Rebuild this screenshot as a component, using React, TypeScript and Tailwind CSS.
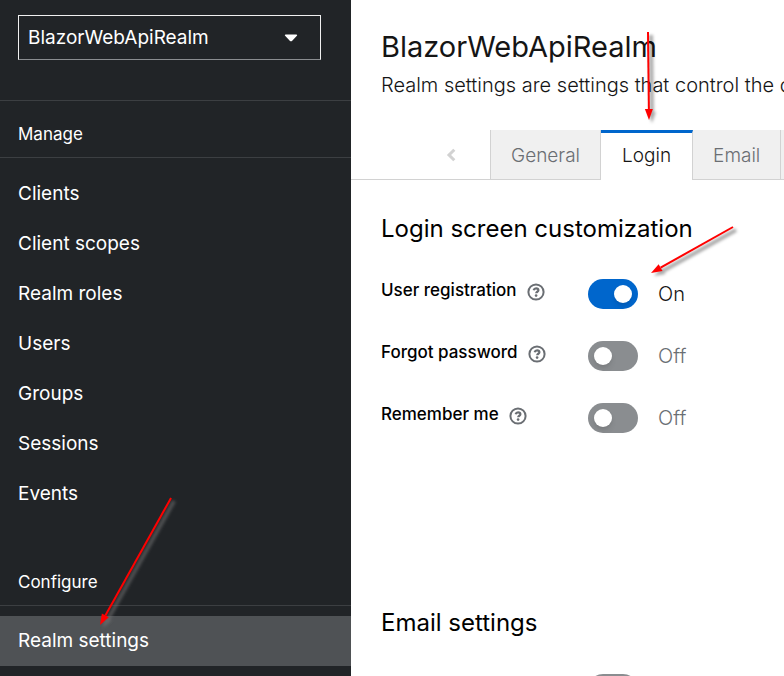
import { useState } from "react";

const manageItems = ["Clients", "Client scopes", "Realm roles", "Users", "Groups", "Sessions", "Events"];

function NavLink({ label, active = false }: { label: string; active?: boolean }) {
  return (
    <li>
      <a
        href="#"
        aria-current={active ? "page" : undefined}
        className={`flex h-[50px] items-center px-[18px] text-[19px] ${active ? "bg-[#4f5255]" : ""}`}
      >
        {label}
      </a>
    </li>
  );
}

function NavHeading({ children }: { children: string }) {
  return (
    <h2 className="flex h-[57px] items-center border-b border-[#3c3f42] px-[18px] pt-[11px] text-[17px]">
      {children}
    </h2>
  );
}

function Sidebar() {
  return (
    <nav className="w-[351px] shrink-0 overflow-hidden bg-[#212427] text-white">
      <div className="border-b border-[#3c3f42] px-[18px] pt-[15px] pb-[40px]">
        <div className="relative mr-[12px]">
          <select
            aria-label="Realm"
            className="block h-[45px] w-full appearance-none border border-[#f0f0f0] border-b-[#8a8d90] bg-transparent px-[9px] pt-[2px] text-[19px] outline-none"
          >
            <option>BlazorWebApiRealm</option>
          </select>
          <svg className="pointer-events-none absolute top-[19px] right-[23px]" width="14" height="8" viewBox="0 0 14 8" aria-hidden="true">
            <path d="M1.6 0.5h10.8c.7 0 1 .8.5 1.3L8 6.9c-.6.6-1.4.6-2 0L1.1 1.8C.6 1.300.9.5 1.600.5z" fill="#fff" />
          </svg>
        </div>
      </div>
      <NavHeading>Manage</NavHeading>
      <ul className="pt-[11px] pb-[30px]">
        {manageItems.map((item) => (
          <NavLink key={item} label={item} />
        ))}
      </ul>
      <NavHeading>Configure</NavHeading>
      <ul className="pt-[10px]">
        <NavLink label="Realm settings" active />
      </ul>
    </nav>
  );
}

function HelpIcon() {
  return (
    <svg width="18" height="18" viewBox="0 0 18 18" fill="none" stroke="#6a6e73" aria-hidden="true">
      <circle cx="9" cy="9" r="7.6" strokeWidth="2" />
      <path d="M6.600 7.200C7 5.900 7.900 5.300 9.100 5.300c1.300 0 2.300.8 2.300 1.900 0 1.500-2.200 1.600-2.200 3.100" strokeWidth="2.200" />
      <circle cx="9.100" cy="12.600" r="1.300" fill="#6a6e73" stroke="none" />
    </svg>
  );
}

function SettingRow({ id, label, initial = false }: { id: string; label: string; initial?: boolean }) {
  const [on, setOn] = useState(initial);
  return (
    <div className="flex h-[30px] items-center">
      <div className="flex w-[207px] shrink-0 items-center gap-[10px] pb-[4px]">
        <label htmlFor={id} className="pb-[4px] text-[17px] leading-[22px] font-medium whitespace-nowrap text-black">
          {label}
        </label>
        <button type="button" aria-label={`More help for ${label}`}>
          <HelpIcon />
        </button>
      </div>
      <input
        id={id}
        type="checkbox"
        role="switch"
        checked={on}
        onChange={(e) => setOn(e.target.checked)}
        className="h-[30px] w-[50px] shrink-0 appearance-none rounded-full bg-[#8a8d90] p-[6px] before:block before:size-[18px] before:rounded-full before:bg-white before:shadow-md checked:bg-[#0066cc] checked:pl-[26px]"
      />
      <span className={`pl-[20px] text-[20px] font-light ${on ? "text-[#151515]" : "text-[#6a6e73]"}`}>
        {on ? "On" : "Off"}
      </span>
    </div>
  );
}

function Tab({ label, active = false }: { label: string; active?: boolean }) {
  return (
    <button
      type="button"
      role="tab"
      aria-selected={active}
      className={`h-[50px] shrink-0 border-[#d2d2d2] text-[19px] font-light ${
        active
          ? "border-t-[3px] border-r border-t-[#0066cc] bg-white px-[21px] pb-[1px] text-[#151515]"
          : "border-r border-b bg-[#f0f0f0] px-[20px] pt-[3px] text-[#6a6e73]"
      }`}
    >
      {label}
    </button>
  );
}

function Arrow({ x1, y1, x2, y2, shadow }: { x1: number; y1: number; x2: number; y2: number; shadow: string }) {
  const length = Math.hypot(x2 - x1, y2 - y1);
  const ux = (x2 - x1) / length;
  const uy = (y2 - y1) / length;
  const bx = x2 - ux * 11;
  const by = y2 - uy * 11;
  const head = `${x2},${y2} ${bx - uy * 4},${by + ux * 4} ${bx + uy * 4},${by - ux * 4}`;
  return (
    <g>
      <g transform="translate(3 3)" stroke={shadow} fill={shadow} filter="url(#soft)">
        <line x1={x1} y1={y1} x2={bx} y2={by} strokeWidth="4" />
        <polygon points={head} stroke="none" />
      </g>
      <line x1={x1} y1={y1} x2={bx} y2={by} stroke="#ff0000" strokeWidth="2" />
      <polygon points={head} fill="#ff0000" />
    </g>
  );
}

export default function App() {
  return (
    <div className="relative flex h-screen overflow-hidden bg-white font-['Inter','Liberation_Sans',sans-serif] text-[#151515]">
      <Sidebar />
      <main className="min-w-0 flex-1 overflow-hidden">
        <header className="px-[30px] pt-[27px]">
          <h1 className="text-[29px] leading-[40px]">BlazorWebApiRealm</h1>
          <p className="pt-[4px] text-[20px] leading-[28px] font-light whitespace-nowrap">
            Realm settings are settings that control the options for users, applications, roles, and groups in the current realm.
          </p>
        </header>
        <div className="flex pt-[31px]" role="tablist">
          <div className="flex w-[140px] shrink-0 items-center justify-end border-r border-b border-[#d2d2d2] pr-[34px]">
            <button type="button" aria-label="Scroll left">
              <svg width="10" height="14" viewBox="0 0 10 14" fill="none" stroke="#d2d2d2" strokeWidth="3" aria-hidden="true">
                <path d="M8.300 1.700 3 7l5.300 5.300" />
              </svg>
            </button>
          </div>
          <Tab label="General" />
          <Tab label="Login" active />
          <Tab label="Email" />
          <Tab label="Themes" />
        </div>
        <section className="px-[30px] pt-[32px] text-black">
          <h2 className="text-[24px] leading-[34px]">Login screen customization</h2>
          <div className="flex flex-col gap-[32px] pt-[33px]">
            <SettingRow id="registration" label="User registration" initial />
            <SettingRow id="forgot" label="Forgot password" />
            <SettingRow id="remember" label="Remember me" />
          </div>
        </section>
        <section className="px-[30px] pt-[173px] text-black">
          <h2 className="text-[24px] leading-[34px]">Email settings</h2>
          <div className="pt-[34px]">
            <SettingRow id="email-username" label="Email as username" />
          </div>
        </section>
      </main>
      <svg className="pointer-events-none absolute top-0 left-0" width="784" height="676" viewBox="0 0 784 676" aria-hidden="true">
        <defs>
          <filter id="soft" filterUnits="userSpaceOnUse" x="0" y="0" width="784" height="676">
            <feGaussianBlur stdDeviation="1.500" />
          </filter>
        </defs>
        <Arrow x1={648} y1={32} x2={649} y2={120} shadow="#00000055" />
        <Arrow x1={733} y1={227} x2={651} y2={273} shadow="#00000055" />
        <Arrow x1={171} y1={498} x2={100} y2={625} shadow="#77777788" />
      </svg>
    </div>
  );
}
